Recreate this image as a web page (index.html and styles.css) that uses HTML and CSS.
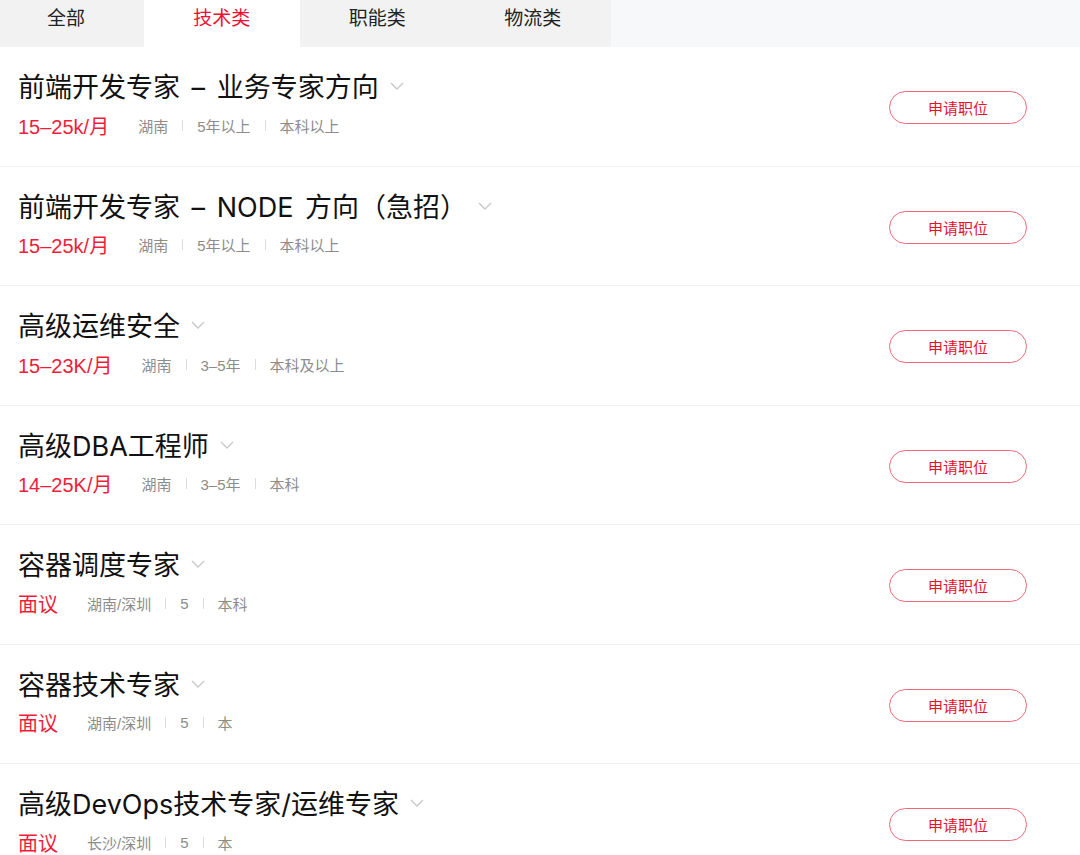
FILE: index.html
```html
<!DOCTYPE html>
<html lang="zh-CN">
<head>
<meta charset="utf-8">
<title>职位列表</title>
<link rel="stylesheet" href="styles.css">
</head>
<body>
<div class="tabs">
  <div class="tab tab-first">全部</div>
  <div class="tab tab-active">技术类</div>
  <div class="tab">职能类</div>
  <div class="tab">物流类</div>
  <div class="tab-rest"></div>
</div>
<ul class="jobs">
  <li class="job">
    <div class="info">
      <div class="title">前端开发专家 – 业务专家方向<span class="chev"><svg width="14" height="8" viewBox="0 0 14 8"><path d="M1 1l6 6 6-6" fill="none" stroke="#c8c8c8" stroke-width="1.4"/></svg></span></div>
      <div class="meta"><span class="salary">15–25k/月</span><span class="m">湖南</span><span class="sep"></span><span class="m">5年以上</span><span class="sep"></span><span class="m">本科以上</span></div>
    </div>
    <button class="apply">申请职位</button>
  </li>
  <li class="job">
    <div class="info">
      <div class="title">前端开发专家 – NODE 方向（急招）<span class="chev"><svg width="14" height="8" viewBox="0 0 14 8"><path d="M1 1l6 6 6-6" fill="none" stroke="#c8c8c8" stroke-width="1.4"/></svg></span></div>
      <div class="meta"><span class="salary">15–25k/月</span><span class="m">湖南</span><span class="sep"></span><span class="m">5年以上</span><span class="sep"></span><span class="m">本科以上</span></div>
    </div>
    <button class="apply">申请职位</button>
  </li>
  <li class="job">
    <div class="info">
      <div class="title">高级运维安全<span class="chev"><svg width="14" height="8" viewBox="0 0 14 8"><path d="M1 1l6 6 6-6" fill="none" stroke="#c8c8c8" stroke-width="1.4"/></svg></span></div>
      <div class="meta"><span class="salary">15–23K/月</span><span class="m">湖南</span><span class="sep"></span><span class="m">3–5年</span><span class="sep"></span><span class="m">本科及以上</span></div>
    </div>
    <button class="apply">申请职位</button>
  </li>
  <li class="job">
    <div class="info">
      <div class="title">高级DBA工程师<span class="chev"><svg width="14" height="8" viewBox="0 0 14 8"><path d="M1 1l6 6 6-6" fill="none" stroke="#c8c8c8" stroke-width="1.4"/></svg></span></div>
      <div class="meta"><span class="salary">14–25K/月</span><span class="m">湖南</span><span class="sep"></span><span class="m">3–5年</span><span class="sep"></span><span class="m">本科</span></div>
    </div>
    <button class="apply">申请职位</button>
  </li>
  <li class="job">
    <div class="info">
      <div class="title">容器调度专家<span class="chev"><svg width="14" height="8" viewBox="0 0 14 8"><path d="M1 1l6 6 6-6" fill="none" stroke="#c8c8c8" stroke-width="1.4"/></svg></span></div>
      <div class="meta"><span class="salary">面议</span><span class="m">湖南/深圳</span><span class="sep"></span><span class="m">5</span><span class="sep"></span><span class="m">本科</span></div>
    </div>
    <button class="apply">申请职位</button>
  </li>
  <li class="job">
    <div class="info">
      <div class="title">容器技术专家<span class="chev"><svg width="14" height="8" viewBox="0 0 14 8"><path d="M1 1l6 6 6-6" fill="none" stroke="#c8c8c8" stroke-width="1.4"/></svg></span></div>
      <div class="meta"><span class="salary">面议</span><span class="m">湖南/深圳</span><span class="sep"></span><span class="m">5</span><span class="sep"></span><span class="m">本</span></div>
    </div>
    <button class="apply">申请职位</button>
  </li>
  <li class="job">
    <div class="info">
      <div class="title">高级DevOps技术专家/运维专家<span class="chev"><svg width="14" height="8" viewBox="0 0 14 8"><path d="M1 1l6 6 6-6" fill="none" stroke="#c8c8c8" stroke-width="1.4"/></svg></span></div>
      <div class="meta"><span class="salary">面议</span><span class="m">长沙/深圳</span><span class="sep"></span><span class="m">5</span><span class="sep"></span><span class="m">本</span></div>
    </div>
    <button class="apply">申请职位</button>
  </li>
</ul>
</body>
</html>
```

FILE: styles.css
```css
* { box-sizing: border-box; }
html, body {
  margin: 0;
  padding: 0;
  background: #fff;
  font-family: "Liberation Sans", "Noto Sans CJK SC", sans-serif;
  color: #1a1a1a;
  overflow: hidden;
}
.tabs {
  display: flex;
  height: 47px;
  background: #f7f8fa;
}
.tab {
  width: 155.5px;
  display: flex;
  align-items: center;
  justify-content: center;
  padding-bottom: 14px;
  font-size: 19px;
  color: #222;
  background: #f2f2f2;
}
.tab-first {
  width: 144px;
  padding-right: 12px;
}
.tab-active {
  background: #fff;
  color: #ee1133;
}
.tab-rest { flex: 1; }
.jobs {
  list-style: none;
  margin: 0;
  padding: 0;
}
.job {
  height: 119.5px;
  display: flex;
  align-items: center;
  justify-content: space-between;
  padding: 0 53px 4px 18px;
  border-bottom: 1px solid #f2f2f2;
}
.info {
  display: flex;
  flex-direction: column;
  gap: 8px;
}
.title {
  font-family: Inter, "Noto Sans CJK SC", sans-serif;
  font-size: 27px;
  line-height: 34px;
  word-spacing: 4px;
  color: #111;
  display: flex;
  align-items: center;
}
.chev {
  display: inline-flex;
  margin-left: 11px;
  margin-top: -4px;
}
.meta {
  display: flex;
  align-items: center;
  height: 24px;
}
.salary {
  font-size: 20px;
  color: #f01d3a;
  margin-right: 29px;
}
.m {
  font-size: 15px;
  color: #8c8c8c;
}
.sep {
  width: 1px;
  height: 11px;
  background: #dcdcdc;
  margin: 0 14px;
}
.apply {
  width: 138px;
  height: 33px;
  border: 1px solid #f06878;
  border-radius: 17px;
  background: #fff;
  color: #e8112d;
  font-family: "Liberation Sans", "Noto Sans CJK SC", sans-serif;
  font-size: 15px;
  padding: 0;
  margin-top: 7px;
}
```
